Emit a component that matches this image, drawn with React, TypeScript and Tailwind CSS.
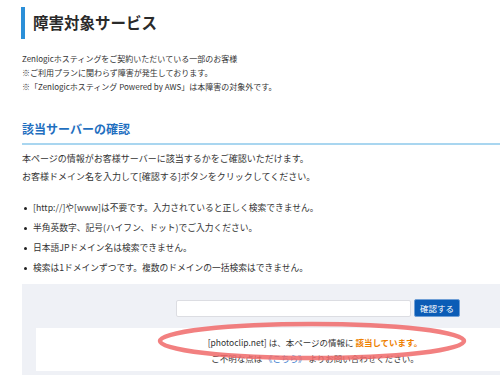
import React from "react";

export default function App() {
  const bullets = [
    "[http://]や[www]は不要です。入力されていると正しく検索できません。",
    "半角英数字、記号(ハイフン、ドット)でご入力ください。",
    "日本語JPドメイン名は検索できません。",
    "検索は1ドメインずつです。複数のドメインの一括検索はできません。",
  ];
  return (
    <div
      className="w-[500px] h-[375px] overflow-hidden bg-white text-[#333]"
      style={{ fontFamily: '"Noto Sans CJK JP", "Noto Sans", sans-serif' }}
    >
      <div className="pl-[21px] pt-[7px]">
        <div className="flex items-center h-[32px] border-l-[4px] border-[#2b8fd8] pl-[8px]">
          <h1 className="text-[15.5px] font-bold text-[#2a2a2a] leading-none">障害対象サービス</h1>
        </div>
      </div>
      <div className="pl-[22px]">
        <div className="mt-[13px] text-[8px] leading-[14px]">
          <p>Zenlogicホスティングをご契約いただいている一部のお客様</p>
          <p>※ご利用プランに関わらず障害が発生しております。</p>
          <p>※「Zenlogicホスティング Powered by AWS」は本障害の対象外です。</p>
        </div>
        <h2 className="mt-[27px] text-[12px] leading-[16px] font-bold text-[#1f6fbf] pb-[6px] border-b-2 border-[#a9d6f0]">
          該当サーバーの確認
        </h2>
        <div className="mt-[5px] text-[9px] leading-[18px]">
          <p>本ページの情報がお客様サーバーに該当するかをご確認いただけます。</p>
          <p>お客様ドメイン名を入力して[確認する]ボタンをクリックしてください。</p>
        </div>
        <ul className="mt-[12px] text-[8.75px] leading-[20px]">
          {bullets.map((b) => (
            <li key={b} className="flex items-center">
              <span className="w-[3px] h-[3px] rounded-full bg-[#222] ml-[2px] mr-[6px]" />
              <span>{b}</span>
            </li>
          ))}
        </ul>
        <div className="relative mt-[6px] w-[586px] bg-[#eff1f6] pt-[15px] px-[14px] pb-[6px]">
          <div className="flex justify-center items-center gap-[3px] pl-[6px]">
            <div className="w-[235px] h-[17px] bg-white border border-[#dcdde2] rounded-[2px]" />
            <button className="h-[18px] px-[5px] bg-[#0b5cb6] text-white text-[8.5px] rounded-[2px] border border-[#6f9fd6] leading-none">
              確認する
            </button>
          </div>
          <div className="mt-[11px] bg-white pt-[6px] pb-[5px] text-center text-[8.5px] leading-[16px]">
            <p>
              [photoclip.net] は、本ページの情報に <span className="text-[#ee8100] font-bold">該当しています。</span>
            </p>
            <p>
              ご不明な点は <span className="text-[#3a80d0]">《こちら》</span> よりお問い合わせください。
            </p>
          </div>
          <svg
            className="absolute left-0 top-0 pointer-events-none"
            width="586"
            height="100"
            viewBox="0 0 586 100"
          >
            <ellipse
              cx="290"
              cy="57"
              rx="152"
              ry="17"
              fill="none"
              stroke="#f06a6a"
              strokeWidth="4.5"
              opacity="0.85"
            />
          </svg>
        </div>
      </div>
    </div>
  );
}
